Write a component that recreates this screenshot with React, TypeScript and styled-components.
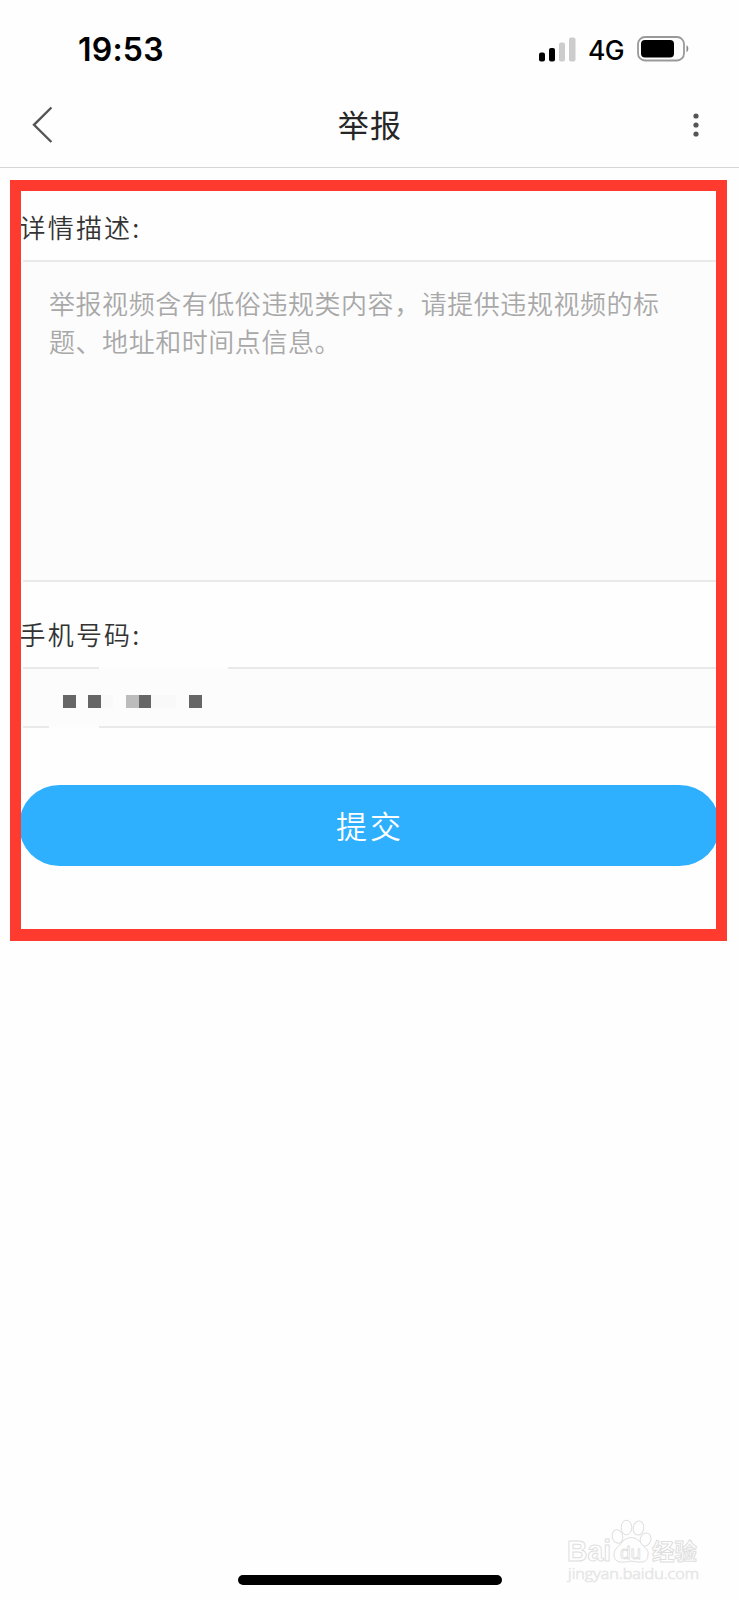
import React from "react";
import styled, { createGlobalStyle } from "styled-components";

const GlobalStyle = createGlobalStyle`
  * { box-sizing: border-box; }
  body {
    margin: 0;
    background: #fefefe;
    font-family: "Noto Sans CJK SC", sans-serif;
    font-weight: 350;
  }
`;

const Screen = styled.div`
  width: 739px;
  height: 1600px;
  display: flex;
  flex-direction: column;
  overflow: hidden;
  background: #fefefe;
`;

const StatusBar = styled.header`
  height: 82px;
  padding: 16px 50px 0 78px;
  display: flex;
  align-items: center;
  justify-content: space-between;
  color: #000;
  font-family: Inter, sans-serif;
`;

const Clock = styled.span`
  font-size: 32px;
  font-weight: 600;
  letter-spacing: 0.2px;
`;

const Indicators = styled.div`
  display: flex;
  align-items: center;
`;

const Network = styled.span`
  margin: 2px 13px 0 12px;
  font-size: 26.5px;
  font-weight: 450;
  letter-spacing: -0.6px;
`;

const NavBar = styled.nav`
  height: 86px;
  padding: 0 40px 0 32px;
  display: grid;
  grid-template-columns: 21px 1fr 6px;
  align-items: center;
  border-bottom: 1px solid #d6d6d6;
`;

const Title = styled.h1`
  margin: 0 6px 1px 0;
  font-size: 31px;
  font-weight: 400;
  line-height: 44px;
  letter-spacing: 1.2px;
  text-align: center;
  color: #262626;
`;

const Report = styled.form`
  position: relative;
  margin: 12px 12px 0 10px;
  height: 761px;
  display: flex;
  flex-direction: column;
`;

const Highlight = styled.div`
  position: absolute;
  inset: 0;
  border: 11px solid #ff3b30;
  border-bottom-width: 12px;
  pointer-events: none;
`;

const Label = styled.label<{ $height: number; $top: number }>`
  height: ${(p) => p.$height}px;
  padding: ${(p) => p.$top}px 0 0 9.5px;
  font-size: 26px;
  line-height: 38px;
  letter-spacing: 2.2px;
  color: #333;
`;

const Rule = styled.div`
  height: 2px;
  padding-left: 13px;
  display: flex;
`;

const Segment = styled.i<{ $width?: number; $clear?: boolean }>`
  flex: ${(p) => (p.$width ? `0 0 ${p.$width}px` : "1")};
  background: ${(p) => (p.$clear ? "#fdfdfd" : "#e9e9e9")};
`;

const Details = styled.div`
  height: 318px;
  padding: 22px 0 0 39px;
  background: #fcfcfc;
  font-size: 26px;
  line-height: 38px;
  letter-spacing: 0.55px;
  color: #a8a8a8;
  white-space: nowrap;
`;

const Phone = styled.div`
  height: 57px;
  padding: 26px 0 0 53px;
  display: flex;
  background: #fcfcfc;
`;

const Cell = styled.i<{ $tone: string }>`
  width: 12.6px;
  height: 12.7px;
  background: ${(p) => p.$tone};
`;

const Submit = styled.button`
  height: 81px;
  margin: 57px 7px 0 9px;
  padding: 0 0 1px 1px;
  border: 0;
  border-radius: 41px;
  background: #2fb0ff;
  color: #fff;
  font-family: inherit;
  font-weight: inherit;
  font-size: 31px;
  line-height: 44px;
  letter-spacing: 3px;
`;

const Footer = styled.footer`
  margin-top: auto;
  display: flex;
  flex-direction: column;
  align-items: flex-end;
  padding: 0 36px 15px 0;
`;

const Watermark = styled.div`
  width: 138px;
  display: flex;
  flex-direction: column;
  margin-bottom: -10px;
`;

const HomeBar = styled.div`
  align-self: center;
  width: 264px;
  height: 10px;
  margin-left: 36px;
  border-radius: 5px;
  background: #000;
`;

const phoneCells = [
  "#666", "transparent", "#666", "#f9f9f9", "transparent", "#bcbcbc",
  "#666", "#f9f9f9", "#f9f9f9", "transparent", "#666",
];

const Signal = () => (
  <svg width="37" height="25" viewBox="0 0 37 25">
    <rect x="0" y="15.5" width="6" height="9" rx="2" />
    <rect x="10" y="11" width="6" height="13.5" rx="2" />
    <rect x="20" y="5.5" width="6" height="19" rx="2" fill="#ccc" />
    <rect x="30" y="0.5" width="6.5" height="24" rx="2" fill="#ccc" />
  </svg>
);

const Battery = () => (
  <svg width="52" height="26" viewBox="0 0 52 26">
    <rect x="1" y="1" width="46" height="23.5" rx="7" fill="none" stroke="#999" strokeWidth="1.8" />
    <rect x="4" y="4" width="33" height="17.5" rx="4" />
    <path d="M49.5 9.3C51.8 10 52 15 49.5 16.2Z" fill="#888" />
  </svg>
);

const Back = () => (
  <svg width="21" height="38" viewBox="0 0 21 38" fill="none" stroke="#555" strokeWidth="2.4">
    <path d="M19.4 1.5L2 18.8L19.4 36" />
  </svg>
);

const More = () => (
  <svg width="6" height="26" viewBox="0 0 6 26" fill="#555">
    <circle cx="3" cy="4" r="2.6" />
    <circle cx="3" cy="13" r="2.6" />
    <circle cx="3" cy="22" r="2.6" />
  </svg>
);

const BaiduLogo = () => (
  <svg width="138" height="66" viewBox="0 0 138 66" fill="#fefefe" stroke="#dedede" strokeWidth="1">
    <text x="2" y="42" fontSize="29" fontFamily="Liberation Sans, sans-serif" fontWeight="700" textLength="44" lengthAdjust="spacingAndGlyphs">Bai</text>
    <ellipse cx="52.5" cy="17.5" rx="5.3" ry="6.8" transform="rotate(-12 52.5 17.5)" />
    <ellipse cx="61.5" cy="8.5" rx="5.3" ry="7.3" />
    <ellipse cx="73.5" cy="9" rx="5.3" ry="7" transform="rotate(10 73.5 9)" />
    <ellipse cx="80.5" cy="20.5" rx="5.3" ry="6.7" transform="rotate(18 80.5 20.5)" />
    <path d="M57 23C62 17 71 17 76 24C80 30 84 30 83 36C83 44 76 44 66 42C57 44 49 44 49 36C49 29 54 28 57 23Z" />
    <text x="55" y="39.5" fontSize="19" fontFamily="Liberation Sans, sans-serif" strokeWidth="0.8" textLength="21">du</text>
    <text x="87" y="40.5" fontSize="22.5" fontWeight="700" fontFamily="Noto Sans CJK SC, sans-serif" textLength="45">经验</text>
    <text x="3" y="60" fontSize="14" fontFamily="Open Sans, sans-serif" stroke="#e6e6e6" strokeWidth="0.7" textLength="131" lengthAdjust="spacingAndGlyphs">jingyan.baidu.com</text>
  </svg>
);

export default function App() {
  return (
    <Screen>
      <GlobalStyle />
      <StatusBar>
        <Clock>19:53</Clock>
        <Indicators>
          <Signal />
          <Network>4G</Network>
          <Battery />
        </Indicators>
      </StatusBar>
      <NavBar>
        <Back />
        <Title>举报</Title>
        <More />
      </NavBar>
      <Report>
        <Label $height={80} $top={27.5}>详情描述:</Label>
        <Rule><Segment /></Rule>
        <Details>
          举报视频含有低俗违规类内容，请提供违规视频的标
          <br />
          题、地址和时间点信息。
        </Details>
        <Rule><Segment /></Rule>
        <Label $height={85} $top={33}>手机号码:</Label>
        <Rule>
          <Segment $width={76} />
          <Segment $width={129} $clear />
          <Segment />
        </Rule>
        <Phone>
          {phoneCells.map((tone, i) => <Cell key={i} $tone={tone} />)}
        </Phone>
        <Rule>
          <Segment $width={26} />
          <Segment $width={50} $clear />
          <Segment />
        </Rule>
        <Submit type="button">提交</Submit>
        <Highlight />
      </Report>
      <Footer>
        <Watermark><BaiduLogo /></Watermark>
        <HomeBar />
      </Footer>
    </Screen>
  );
}
